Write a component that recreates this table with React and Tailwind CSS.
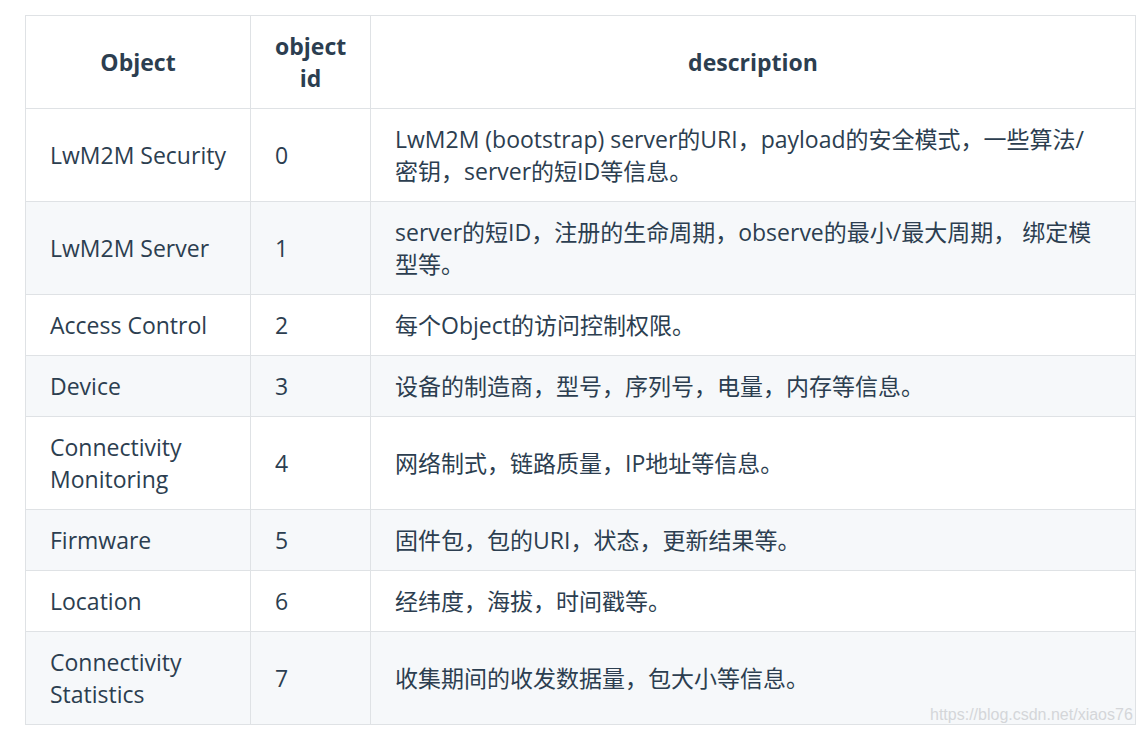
export default function App() {
  const rows = [
    ["LwM2M Security", "0", ["LwM2M (bootstrap) server的URI，payload的安全模式，一些算法/", "密钥，server的短ID等信息。"]],
    ["LwM2M Server", "1", ["server的短ID，注册的生命周期，observe的最小/最大周期， 绑定模", "型等。"]],
    ["Access Control", "2", ["每个Object的访问控制权限。"]],
    ["Device", "3", ["设备的制造商，型号，序列号，电量，内存等信息。"]],
    [["Connectivity", "Monitoring"], "4", ["网络制式，链路质量，IP地址等信息。"]],
    ["Firmware", "5", ["固件包，包的URI，状态，更新结果等。"]],
    ["Location", "6", ["经纬度，海拔，时间戳等。"]],
    [["Connectivity", "Statistics"], "7", ["收集期间的收发数据量，包大小等信息。"]],
  ];
  const lines = (v) =>
    Array.isArray(v)
      ? v.map((l, i) => (
          <span key={i} className="block whitespace-nowrap">
            {l}
          </span>
        ))
      : v;
  return (
    <div
      className="w-[1140px] h-[734px] bg-white pt-[15px] pl-[25px] relative overflow-hidden"
      style={{ fontFamily: '"Open Sans", "Noto Sans CJK SC", sans-serif' }}
    >
      <table className="table-fixed border-collapse w-[1110px] text-[23px] leading-[32px] text-[#2c3e50]">
        <colgroup>
          <col className="w-[225px]" />
          <col className="w-[120px]" />
          <col className="w-[765px]" />
        </colgroup>
        <thead>
          <tr>
            <th className="border border-[#dfe2e5] px-[24px] py-[14px] font-bold text-center align-middle">Object</th>
            <th className="border border-[#dfe2e5] px-[24px] py-[14px] font-bold text-center align-middle">
              <span className="block">object</span>
              <span className="block">id</span>
            </th>
            <th className="border border-[#dfe2e5] px-[24px] py-[14px] font-bold text-center align-middle">description</th>
          </tr>
        </thead>
        <tbody>
          {rows.map((r, i) => (
            <tr key={i} className={i % 2 === 1 ? "bg-[#f6f8fa]" : "bg-white"}>
              <td className="border border-[#dfe2e5] px-[24px] py-[14px] align-middle">{lines(r[0])}</td>
              <td className="border border-[#dfe2e5] px-[24px] py-[14px] align-middle">{r[1]}</td>
              <td className="border border-[#dfe2e5] px-[24px] py-[14px] align-middle">{lines(r[2])}</td>
            </tr>
          ))}
        </tbody>
      </table>
      <div
        className="absolute left-[930px] top-[705px] text-[16px] leading-[20px] text-[#d4d6d9]"
        style={{ fontFamily: '"Liberation Sans", Arial, sans-serif' }}
      >
        https://blog.csdn.net/xiaos76
      </div>
    </div>
  );
}
